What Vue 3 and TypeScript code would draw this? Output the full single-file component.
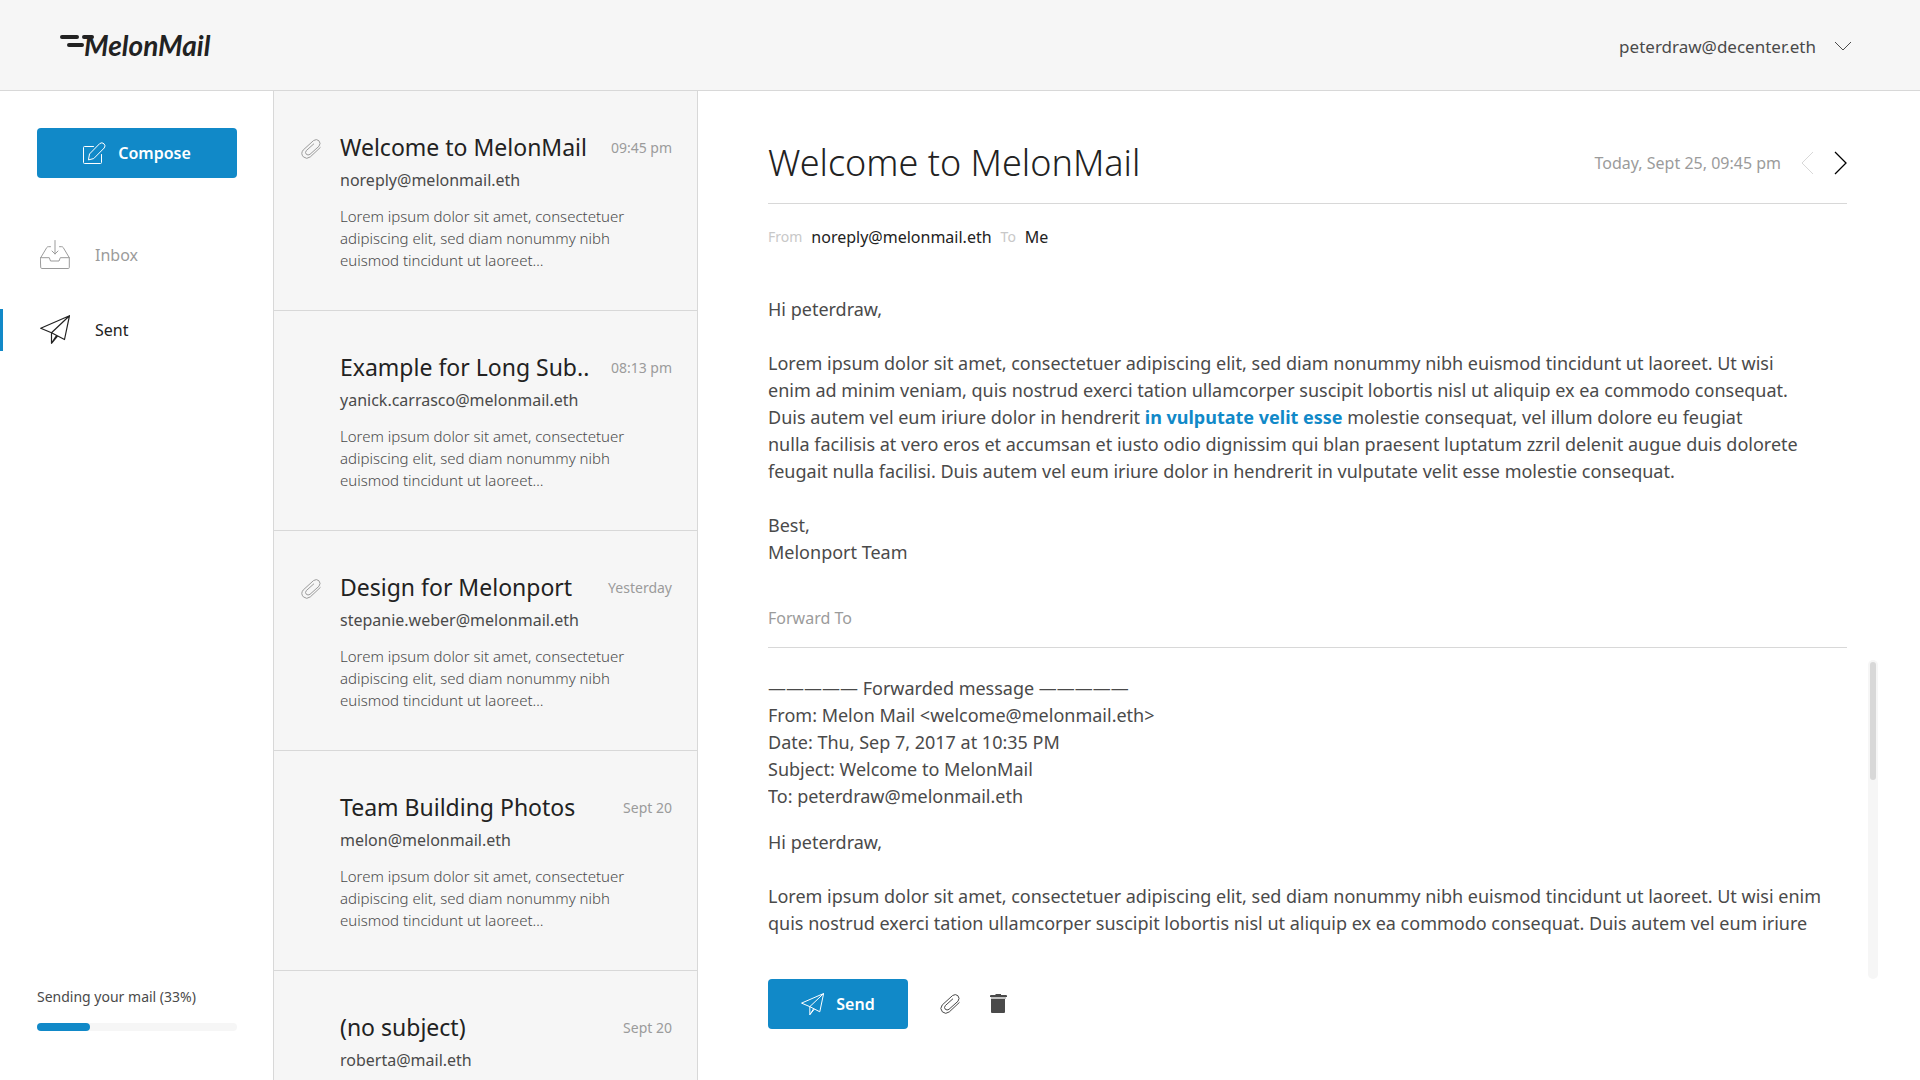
<script setup lang="ts">
interface MailItem {
  subject: string
  sender: string
  date: string
  attachment: boolean
  preview: string[]
}

const excerpt = [
  'Lorem ipsum dolor sit amet, consectetuer',
  'adipiscing elit, sed diam nonummy nibh',
  'euismod tincidunt ut laoreet…',
]

const mails: MailItem[] = [
  { subject: 'Welcome to MelonMail', sender: 'noreply@melonmail.eth', date: '09:45 pm', attachment: true, preview: excerpt },
  { subject: 'Example for Long Sub..', sender: 'yanick.carrasco@melonmail.eth', date: '08:13 pm', attachment: false, preview: excerpt },
  { subject: 'Design for Melonport', sender: 'stepanie.weber@melonmail.eth', date: 'Yesterday', attachment: true, preview: excerpt },
  { subject: 'Team Building Photos', sender: 'melon@melonmail.eth', date: 'Sept 20', attachment: false, preview: excerpt },
  { subject: '(no subject)', sender: 'roberta@mail.eth', date: 'Sept 20', attachment: false, preview: [] },
]
</script>

<template>
  <div class="shell">
    <header class="topbar">
      <a class="logo" href="#">
        <svg class="logo-lines" width="36" height="20" viewBox="0 0 36 20" aria-hidden="true">
          <path d="M2 2H17M24 2H32M9 10H22" fill="none" stroke="#222" stroke-width="4" stroke-linecap="round" />
        </svg>
        <span class="logo-name">MelonMail</span>
      </a>
      <button class="account" type="button">
        <span>peterdraw@decenter.eth</span>
        <svg width="18" height="10" viewBox="0 0 18 10" aria-hidden="true">
          <path d="M1 1L9 9L17 1" fill="none" stroke="#4a4a4a" />
        </svg>
      </button>
    </header>

    <div class="columns">
      <aside class="sidebar">
        <button class="primary compose" type="button">
          <svg width="23" height="23" viewBox="0 0 23 23" aria-hidden="true">
            <g fill="none" stroke="#fff" stroke-linejoin="round" stroke-linecap="round">
              <path d="M10.500 4.500H1.500Q.5 4.500 .5 5.500V20.500Q.5 21.500 1.500 21.500H17.500Q18.500 21.500 18.500 20.500V12.500" />
              <path d="M5.500 17.500L6.500 12L16.700 1.600Q19 -.2 21 1.800Q23 3.800 21.200 6L11 16.300Z" />
            </g>
          </svg>
          <span>Compose</span>
        </button>
        <nav class="folders">
          <a class="folder" href="#inbox">
            <svg width="30" height="30" viewBox="0 0 30 30" aria-hidden="true">
              <g fill="none" stroke="currentColor" stroke-linejoin="round" stroke-linecap="round">
                <path d="M.7 17.700H9.300L10.500 21H19L20.300 17.700H29.300V27.500Q29.300 28.500 28.300 28.500H1.700Q.7 28.500 .7 27.500Z" />
                <path d="M.7 17.700L6.800 7.500Q7.300 6.700 8.300 6.700H10.500M29.300 17.700L23.200 7.500Q22.700 6.700 21.700 6.700H19.500" />
                <path d="M15 .5V14M12 11L15 14L18 11" />
              </g>
            </svg>
            <span>Inbox</span>
          </a>
          <a class="folder active" href="#sent" aria-current="page">
            <svg width="30" height="30" viewBox="0 0 30 30" aria-hidden="true">
              <path d="M29.500 .7L.7 13.200L11.500 17.800L24.500 24.500ZM29.500 .7L11.500 17.800V28.300L16.500 20.500M11.500 28.300L17.500 21" fill="none" stroke="currentColor" stroke-width="1.200" stroke-linejoin="round" />
            </svg>
            <span>Sent</span>
          </a>
        </nav>
        <div class="sending">
          <label for="sending-bar">Sending your mail (33%)</label>
          <progress id="sending-bar" value="53" max="200"></progress>
        </div>
      </aside>

      <section class="list">
        <article v-for="mail in mails" :key="mail.subject" class="mail">
          <span class="mail-icon">
            <svg v-if="mail.attachment" width="20" height="20" viewBox="0 0 20 20" aria-hidden="true">
              <path d="M19.500 8.300L9.300 17.900Q5.600 20.800 2.400 17.900Q-.7 14.500 2.200 11L12.600 1.500Q15.500 -.4 17.900 1.700Q20.200 4.300 18 7.200L9 15.300Q7 16.700 5.300 15.300Q3.700 13.500 5.300 11.600L13 4.700" fill="none" stroke="#9b9b9b" />
            </svg>
          </span>
          <div class="mail-text">
            <div class="mail-head">
              <h2>{{ mail.subject }}</h2>
              <time>{{ mail.date }}</time>
            </div>
            <p class="mail-sender">{{ mail.sender }}</p>
            <p v-if="mail.preview.length" class="mail-preview">
              <span v-for="line in mail.preview" :key="line">{{ line }}</span>
            </p>
          </div>
        </article>
      </section>

      <main class="reader">
        <div class="reader-head">
          <h1>Welcome to MelonMail</h1>
          <time>Today, Sept 25, 09:45 pm</time>
          <button class="icon-button" type="button" aria-label="Previous mail">
            <svg width="13" height="24" viewBox="0 0 13 24"><path d="M12 1L1 12L12 23" fill="none" stroke="#d8d8d8" /></svg>
          </button>
          <button class="icon-button next" type="button" aria-label="Next mail">
            <svg width="13" height="24" viewBox="0 0 13 24"><path d="M1 1L12 12L1 23" fill="none" stroke="#000" stroke-width="1.300" /></svg>
          </button>
        </div>
        <div class="route">
          <span class="route-label">From</span>
          <span class="route-name">noreply@melonmail.eth</span>
          <span class="route-label">To</span>
          <span class="route-name">Me</span>
        </div>
        <div class="letter">
          <p>Hi peterdraw,</p>
          <p>
            Lorem ipsum dolor sit amet, consectetuer adipiscing elit, sed diam nonummy nibh euismod tincidunt ut laoreet. Ut wisi<br />
            enim ad minim veniam, quis nostrud exerci tation ullamcorper suscipit lobortis nisl ut aliquip ex ea commodo consequat.<br />
            Duis autem vel eum iriure dolor in hendrerit <a href="#">in vulputate velit esse</a> molestie consequat, vel illum dolore eu feugiat<br />
            nulla facilisis at vero eros et accumsan et iusto odio dignissim qui blan praesent luptatum zzril delenit augue duis dolorete<br />
            feugait nulla facilisi. Duis autem vel eum iriure dolor in hendrerit in vulputate velit esse molestie consequat.
          </p>
          <p>Best,<br />Melonport Team</p>
        </div>
        <input class="forward-to" type="text" placeholder="Forward To" aria-label="Forward To" />
        <div class="forward">
          <div class="forward-text">
            <p>
              ————— Forwarded message —————<br />
              From: Melon Mail &lt;welcome@melonmail.eth&gt;<br />
              Date: Thu, Sep 7, 2017 at 10:35 PM<br />
              Subject: Welcome to MelonMail<br />
              To: peterdraw@melonmail.eth
            </p>
            <p class="forward-greeting">Hi peterdraw,</p>
            <p>
              Lorem ipsum dolor sit amet, consectetuer adipiscing elit, sed diam nonummy nibh euismod tincidunt ut laoreet. Ut wisi enim<br />
              quis nostrud exerci tation ullamcorper suscipit lobortis nisl ut aliquip ex ea commodo consequat. Duis autem vel eum iriure
            </p>
          </div>
          <div class="scrollbar"><div class="thumb"></div></div>
        </div>
        <div class="actions">
          <button class="primary send" type="button">
            <svg width="23" height="23" viewBox="0 0 30 30" aria-hidden="true">
              <path d="M29.500 .7L.7 13.200L11.500 17.800L24.500 24.500ZM29.500 .7L11.500 17.800V28.300L16.500 20.500M11.500 28.300L17.500 21" fill="none" stroke="#fff" stroke-width="1.300" stroke-linejoin="round" />
            </svg>
            <span>Send</span>
          </button>
          <button class="icon-button attach" type="button" aria-label="Attach file">
            <svg width="20" height="20" viewBox="0 0 20 20">
              <path d="M19.500 8.300L9.300 17.900Q5.600 20.800 2.400 17.900Q-.7 14.500 2.200 11L12.600 1.500Q15.500 -.4 17.900 1.700Q20.200 4.300 18 7.200L9 15.300Q7 16.700 5.300 15.300Q3.700 13.500 5.300 11.600L13 4.700" fill="none" stroke="#4a4a4a" />
            </svg>
          </button>
          <button class="icon-button" type="button" aria-label="Discard">
            <svg width="17" height="20" viewBox="0 0 17 20">
              <path d="M5.500 0H11V1H16Q17 1 17 2V3H0V2Q0 1 1 1H5.500ZM1 5H15V18Q15 19 14 19H2Q1 19 1 18Z" fill="#4a4a4a" />
              <path d="M1 3H16V5H1Z" fill="#c4c4c4" />
            </svg>
          </button>
        </div>
      </main>
    </div>
  </div>
</template>

<style>
body {
  margin: 0;
}
</style>

<style scoped>
.shell {
  display: flex;
  flex-direction: column;
  height: 100vh;
  overflow: hidden;
  background: #fff;
  color: #4a4a4a;
  font-family: "Noto Sans", "Open Sans", sans-serif;
  font-size: 16px;
}
h1, h2, p {
  margin: 0;
  font-weight: 400;
}
a {
  color: inherit;
  text-decoration: none;
}
button {
  display: flex;
  align-items: center;
  padding: 0;
  border: 0;
  background: none;
  color: inherit;
  font: inherit;
  cursor: pointer;
}
svg {
  display: block;
  flex: none;
}
.topbar {
  display: flex;
  flex: none;
  align-items: center;
  justify-content: space-between;
  height: 90px;
  padding: 0 68px 0 60px;
  border-bottom: 1px solid #d8d8d8;
  background: #f6f6f6;
}
.logo {
  display: flex;
  align-items: center;
}
.logo-name {
  margin-left: -12px;
  color: #222;
  font: italic 700 28px/36px Lato, sans-serif;
}
.account {
  gap: 18px;
  padding-top: 2px;
  font-size: 17px;
}
.columns {
  display: flex;
  flex: 1;
  min-height: 0;
}
.sidebar {
  display: flex;
  flex: none;
  flex-direction: column;
  width: 273px;
}
.primary {
  justify-content: center;
  height: 50px;
  border-radius: 4px;
  background: #1189c8;
  color: #fff;
  font-weight: 600;
}
.compose {
  gap: 12px;
  margin: 37px 36px 56px 37px;
}
.folders {
  display: flex;
  flex-direction: column;
  gap: 33px;
}
.folder {
  display: flex;
  align-items: center;
  gap: 25px;
  height: 42px;
  padding-left: 37px;
  border-left: 3px solid transparent;
  color: #9b9b9b;
}
.active {
  border-color: #1189c8;
  color: #222;
}
.sending {
  display: flex;
  flex-direction: column;
  gap: 16px;
  margin: auto 36px 49px 37px;
  font-size: 14px;
  line-height: 20px;
}
progress {
  display: block;
  width: 100%;
  height: 8px;
  border: 0;
  appearance: none;
}
progress::-webkit-progress-bar {
  border-radius: 4px;
  background: #f6f6f6;
}
progress::-webkit-progress-value {
  border-radius: 4px;
  background: #1189c8;
}
.list {
  flex: none;
  box-sizing: border-box;
  width: 425px;
  overflow: hidden;
  border: solid #d8d8d8;
  border-width: 0 1px;
  background: #f6f6f6;
}
.mail {
  display: flex;
  box-sizing: border-box;
  height: 220px;
  padding: 40px 25px 0 27px;
  border-bottom: 1px solid #d8d8d8;
}
.mail-icon {
  flex: none;
  width: 39px;
  padding-top: 8px;
}
.mail-text {
  flex: 1;
}
.mail-head {
  display: flex;
  align-items: center;
  justify-content: space-between;
  white-space: nowrap;
}
h2 {
  color: #222;
  font-size: 23px;
  line-height: 32px;
}
.mail-head time {
  color: #9b9b9b;
  font-size: 14px;
}
.mail-sender {
  margin: 6px 0 14px;
  line-height: 22px;
}
.mail-preview {
  font-size: 15px;
  font-weight: 300;
  line-height: 22px;
}
.mail-preview span {
  display: block;
  white-space: nowrap;
}
.reader {
  display: flex;
  flex: 1;
  flex-direction: column;
  min-width: 0;
  padding: 0 42px 51px 70px;
}
.reader-head {
  display: flex;
  flex: none;
  align-items: center;
  box-sizing: border-box;
  height: 113px;
  margin-right: 31px;
  padding-top: 32px;
  border-bottom: 1px solid #d8d8d8;
}
h1 {
  flex: 1;
  color: #222;
  font-size: 36px;
  font-weight: 300;
  line-height: 48px;
}
.reader-head time {
  margin-right: 20px;
  color: #9b9b9b;
}
.reader-head .next {
  margin-left: 20px;
}
.route {
  display: flex;
  align-items: center;
  gap: 9px;
  padding-top: 21px;
  line-height: 24px;
}
.route-label {
  color: #c8c8c8;
  font-size: 14px;
}
.route-name {
  color: #222;
}
.letter {
  display: flex;
  flex-direction: column;
  gap: 27px;
  padding: 47px 0 36px;
  font-size: 18px;
  line-height: 27px;
  white-space: nowrap;
}
.letter a {
  color: #1189c8;
  font-weight: 700;
}
.forward-to {
  box-sizing: border-box;
  height: 46px;
  margin: 0 31px 12px 0;
  padding: 0 0 14px;
  border: 0;
  border-bottom: 1px solid #d8d8d8;
  outline: 0;
  color: #4a4a4a;
  font: inherit;
}
.forward-to::placeholder {
  color: #9b9b9b;
}
.forward {
  display: flex;
  flex: 1;
  min-height: 0;
}
.forward-text {
  flex: 1;
  min-width: 0;
  padding-top: 15px;
  overflow: hidden;
  font-size: 18px;
  line-height: 27px;
  white-space: nowrap;
}
.forward-greeting {
  margin: 19px 0 27px;
}
.scrollbar {
  flex: none;
  width: 10px;
  border-radius: 5px;
  background: #f6f6f6;
}
.thumb {
  height: 37%;
  margin: 2px;
  border-radius: 3px;
  background: #d8d8d8;
}
.actions {
  display: flex;
  flex: none;
  align-items: center;
}
.send {
  gap: 12px;
  width: 140px;
}
.attach {
  margin: 0 30px 0 32px;
}
</style>
